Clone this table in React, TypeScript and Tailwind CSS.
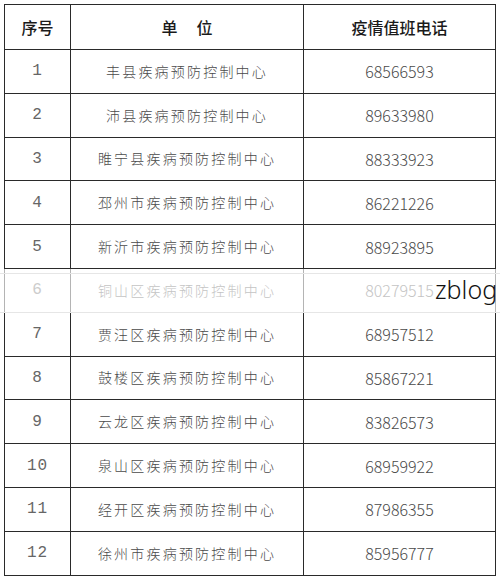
import React from 'react';

interface Row {
  no: number;
  unit: string;
  phone: string;
}

const ROWS: Row[] = [
  { no: 1, unit: '丰县疾病预防控制中心', phone: '68566593' },
  { no: 2, unit: '沛县疾病预防控制中心', phone: '89633980' },
  { no: 3, unit: '睢宁县疾病预防控制中心', phone: '88333923' },
  { no: 4, unit: '邳州市疾病预防控制中心', phone: '86221226' },
  { no: 5, unit: '新沂市疾病预防控制中心', phone: '88923895' },
  { no: 6, unit: '铜山区疾病预防控制中心', phone: '80279515' },
  { no: 7, unit: '贾汪区疾病预防控制中心', phone: '68957512' },
  { no: 8, unit: '鼓楼区疾病预防控制中心', phone: '85867221' },
  { no: 9, unit: '云龙区疾病预防控制中心', phone: '83826573' },
  { no: 10, unit: '泉山区疾病预防控制中心', phone: '68959922' },
  { no: 11, unit: '经开区疾病预防控制中心', phone: '87986355' },
  { no: 12, unit: '徐州市疾病预防控制中心', phone: '85956777' },
];

const cjk = "font-['Noto_Sans_CJK_SC',sans-serif]";

export default function App() {
  return (
    <div className="relative w-[500px] h-[581px] bg-white overflow-hidden">
      <div className="pt-[4px] pl-[4px]">
        <table className="border-collapse table-fixed w-[491px]">
          <colgroup>
            <col className="w-[66px]" />
            <col className="w-[233px]" />
            <col className="w-[192px]" />
          </colgroup>
          <thead>
            <tr className={`h-[45px] text-[16px] font-medium text-[#1a1a1a] ${cjk}`}>
              <th className="border-[1.5px] border-[#2a2a2a] text-center font-medium">序号</th>
              <th className="border-[1.5px] border-[#2a2a2a] text-center font-medium">
                <span className="tracking-[19px] mr-[-19px]">单位</span>
              </th>
              <th className="border-[1.5px] border-[#2a2a2a] text-center font-medium">疫情值班电话</th>
            </tr>
          </thead>
          <tbody>
            {ROWS.map(row => {
              const faded = row.no === 6;
              const line = faded ? 'border-[#b4b4b4]' : 'border-[#2a2a2a]';
              const text = faded ? 'text-[#c4c4c4]' : 'text-[#4a4a4a]';
              return (
                <tr key={row.no} className="h-[43.8px]">
                  <td className={`border-[1.5px] ${line} ${faded ? 'border-t-[#2a2a2a] text-[#cccccc]' : 'text-[#666]'} text-center font-['Liberation_Mono',monospace] text-[16px] tracking-[1px]`}>
                    {row.no}
                  </td>
                  <td className={`border-[1.5px] ${line} ${faded ? 'border-t-[#2a2a2a]' : ''} text-center ${text} ${cjk} font-light text-[14px] tracking-[2.2px]`}>
                    {row.unit}
                  </td>
                  <td className={`border-[1.5px] ${line} ${faded ? 'border-t-[#2a2a2a]' : ''} text-center ${text} ${cjk} font-light text-[16px]`}>
                    {row.phone}
                  </td>
                </tr>
              );
            })}
          </tbody>
        </table>
      </div>
      {/* watermark band over row 6 */}
      <div className="absolute left-0 top-[273px] w-[500px] h-[40px] border-y border-[#e6e6e6] pointer-events-none" />
      <div className="absolute left-[435px] top-[271px] font-['Noto_Sans',sans-serif] font-light text-[25px] leading-[36px] text-[#111] pointer-events-none">
        zblog
      </div>
    </div>
  );
}
